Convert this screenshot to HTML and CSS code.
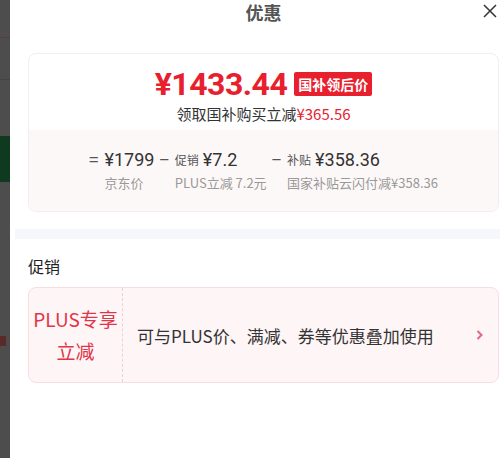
FILE: index.html
```html
<!DOCTYPE html>
<html lang="zh-CN">
<head>
  <meta charset="UTF-8">
  <meta name="viewport" content="width=device-width, initial-scale=1.0">
  <title>优惠</title>
  <link rel="stylesheet" href="styles.css">
</head>

<body>
  <div class="mask">
    <div class="mask-line"></div>
    <div class="mask-line second"></div>
    <div class="mask-green"></div>
    <div class="mask-dot"></div>
  </div>

  <div class="panel">
    <div class="header">
      <h1>优惠</h1>
      <span class="close">
        <svg width="14" height="14" viewBox="0 0 14 14"><path d="M1 1L13 13M13 1L1 13" stroke="#333" stroke-width="1.5" fill="none"/></svg>
      </span>
    </div>

    <div class="price-card">
      <div class="price-top">
        <div class="price-row">
          <span class="final-price">¥1433.44</span>
          <span class="tag">国补领后价</span>
        </div>
        <div class="save">领取国补购买立减<span class="red">¥365.56</span></div>
      </div>

      <div class="price-bottom">
        <div class="calc">
          <span class="op">=</span>
          <div class="calc-item">
            <div class="calc-top"><span class="num">¥1799</span></div>
            <div class="calc-desc">京东价</div>
          </div>
        </div>
        <div class="calc">
          <span class="op">−</span>
          <div class="calc-item">
            <div class="calc-top"><span class="small">促销</span><span class="num">¥7.2</span></div>
            <div class="calc-desc">PLUS立减 7.2元</div>
          </div>
        </div>
        <div class="calc">
          <span class="op">−</span>
          <div class="calc-item">
            <div class="calc-top"><span class="small">补贴</span><span class="num">¥358.36</span></div>
            <div class="calc-desc">国家补贴云闪付减¥358.36</div>
          </div>
        </div>
      </div>
    </div>

    <div class="band"></div>

    <h2>促销</h2>

    <div class="promo">
      <div class="promo-label">PLUS专享<br>立减</div>
      <div class="promo-text">可与PLUS价、满减、券等优惠叠加使用</div>
      <span class="arrow">
        <svg width="7" height="10" viewBox="0 0 7 10"><path d="M1.5 1L5.5 5L1.5 9" stroke="#e0697b" stroke-width="2" fill="none"/></svg>
      </span>
    </div>
  </div>
</body>

</html>
```

FILE: styles.css
```css
body {
  margin: 0;
  font-family: "Noto Sans CJK SC", "Noto Sans", sans-serif;
  color: #333;
  background-color: #fff;
  display: flex;
  height: 458px;
  overflow: hidden;
}
.mask {
  width: 10px;
  flex-shrink: 0;
  background-color: #4d4d4d;
  display: flex;
  flex-direction: column;
}
.mask-line {
  height: 1px;
  margin-top: 37px;
  background-color: #5e3b3b;
}
.mask-line.second {
  margin-top: 41px;
  background-color: #444;
}
.mask-green {
  height: 46px;
  margin-top: 56px;
  background-color: #0f3a1f;
}
.mask-dot {
  width: 6px;
  height: 10px;
  margin-top: 154px;
  background-color: #5a2a2a;
}
.panel {
  flex: 1;
  padding-left: 18px;
  padding-right: 1px;
}
.header {
  height: 24px;
  display: flex;
  justify-content: center;
  align-items: center;
  position: relative;
  margin-bottom: 29px;
}
h1 {
  margin: 0;
  font-size: 18px;
  line-height: 24px;
  color: #555;
  font-weight: bold;
}
.close {
  position: absolute;
  right: 2px;
  top: 4px;
  display: flex;
}
.price-card {
  border: 1px solid #f0eeee;
  border-radius: 8px;
  overflow: hidden;
}
.price-top {
  padding: 13px 0 6px;
  text-align: center;
}
.price-row {
  display: flex;
  justify-content: center;
  align-items: center;
  gap: 7px;
  height: 34px;
}
.final-price {
  color: #e8202e;
  font-family: Roboto, "Noto Sans", sans-serif;
  font-weight: bold;
  font-size: 32px;
  letter-spacing: -0.5px;
}
.tag {
  background-color: #e8202e;
  color: #fff;
  font-size: 14px;
  font-weight: bold;
  line-height: 24px;
  padding: 0 4px;
  border-radius: 2px;
}
.save {
  font-size: 15px;
  line-height: 20px;
  margin-top: 3px;
  color: #333;
}
.red {
  color: #e8202e;
}
.price-bottom {
  background-color: #fdf8f8;
  padding: 18px 0 19px;
  display: flex;
  justify-content: center;
  gap: 5px;
}
.calc {
  display: flex;
  gap: 6px;
}
.op {
  font-size: 17px;
  line-height: 22px;
  color: #555;
}
.calc-top {
  display: flex;
  align-items: center;
  gap: 4px;
  height: 22px;
}
.num {
  font-family: Roboto, "Noto Sans", sans-serif;
  font-size: 18px;
  color: #333;
}
.small {
  font-size: 12px;
  color: #555;
}
.calc-desc {
  margin-top: 4px;
  font-size: 13px;
  line-height: 18px;
  color: #999;
}
.band {
  height: 10px;
  margin: 17px -1px 0 -13px;
  background-color: #f6f7fb;
}
h2 {
  margin: 15px 0 9px;
  font-size: 16px;
  line-height: 24px;
  font-weight: normal;
  color: #222;
}
.promo {
  height: 94px;
  display: flex;
  align-items: center;
  background-color: #fef5f6;
  border: 1px solid #f8dde1;
  border-radius: 8px;
}
.promo-label {
  width: 93px;
  height: 100%;
  display: flex;
  align-items: center;
  justify-content: center;
  text-align: center;
  font-size: 19px;
  line-height: 32px;
  color: #e0364a;
  border-right: 1px dashed #ecd0d4;
}
.promo-text {
  flex: 1;
  padding-left: 14px;
  font-size: 17px;
  color: #333;
}
.arrow {
  display: flex;
  margin-right: 15px;
}
```
